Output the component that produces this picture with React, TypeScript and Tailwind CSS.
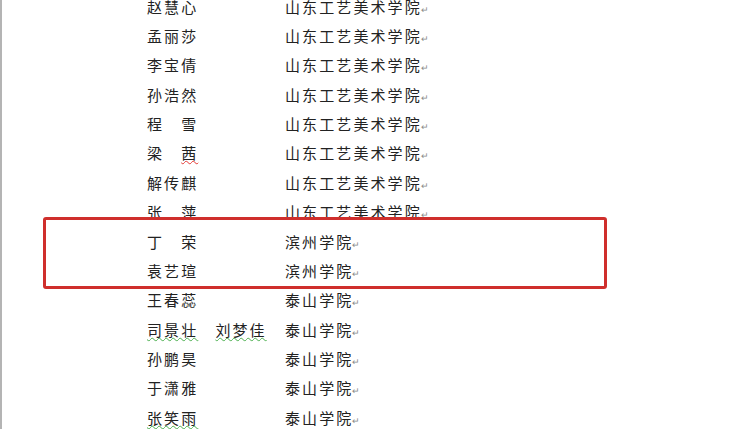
import React from "react";

type Row = { name: React.ReactNode; school: string };

const wavyGreen = "underline decoration-wavy decoration-[#4caf50] decoration-1 underline-offset-[1px]";
const wavyRed = "underline decoration-wavy decoration-[#e53935] decoration-1 underline-offset-[1px]";

const rows: Row[] = [
  { name: "赵慧心", school: "山东工艺美术学院" },
  { name: "孟丽莎", school: "山东工艺美术学院" },
  { name: "李宝倩", school: "山东工艺美术学院" },
  { name: "孙浩然", school: "山东工艺美术学院" },
  { name: "程　雪", school: "山东工艺美术学院" },
  { name: <>梁　<span className={wavyRed}>茜</span></>, school: "山东工艺美术学院" },
  { name: "解传麒", school: "山东工艺美术学院" },
  { name: "张　萍", school: "山东工艺美术学院" },
  { name: "丁　荣", school: "滨州学院" },
  { name: "袁艺瑄", school: "滨州学院" },
  { name: "王春蕊", school: "泰山学院" },
  {
    name: (
      <>
        <span className={wavyGreen}>司景壮</span>　<span className={wavyGreen}>刘梦佳</span>
      </>
    ),
    school: "泰山学院",
  },
  { name: "孙鹏昊", school: "泰山学院" },
  { name: "于潇雅", school: "泰山学院" },
  { name: <span className={wavyGreen}>张笑雨</span>, school: "泰山学院" },
];

export default function App() {
  return (
    <div className="relative w-[729px] h-[429px] overflow-hidden bg-white border-l-2 border-[#b4b4b4]">
      <div
        className="mt-[-8px] pl-[145px] text-[15px] tracking-[2.1px] text-[#222222]"
        style={{ fontFamily: '"Noto Sans CJK SC", "Noto Sans", sans-serif' }}
      >
        {rows.map((r, i) => (
          <div key={i} className="flex items-center h-[29.36px] whitespace-nowrap leading-[20px]">
            <div className="w-[138px] shrink-0">{r.name}</div>
            <div>
              {r.school}
              <span className="text-[9px] leading-none tracking-normal text-[#8a8a8a] -ml-[1px]">↵</span>
            </div>
          </div>
        ))}
      </div>
      <div className="absolute left-[41px] top-[217px] w-[564px] h-[72px] border-[3px] border-[#cf2f2c] rounded-[3px]" />
    </div>
  );
}
